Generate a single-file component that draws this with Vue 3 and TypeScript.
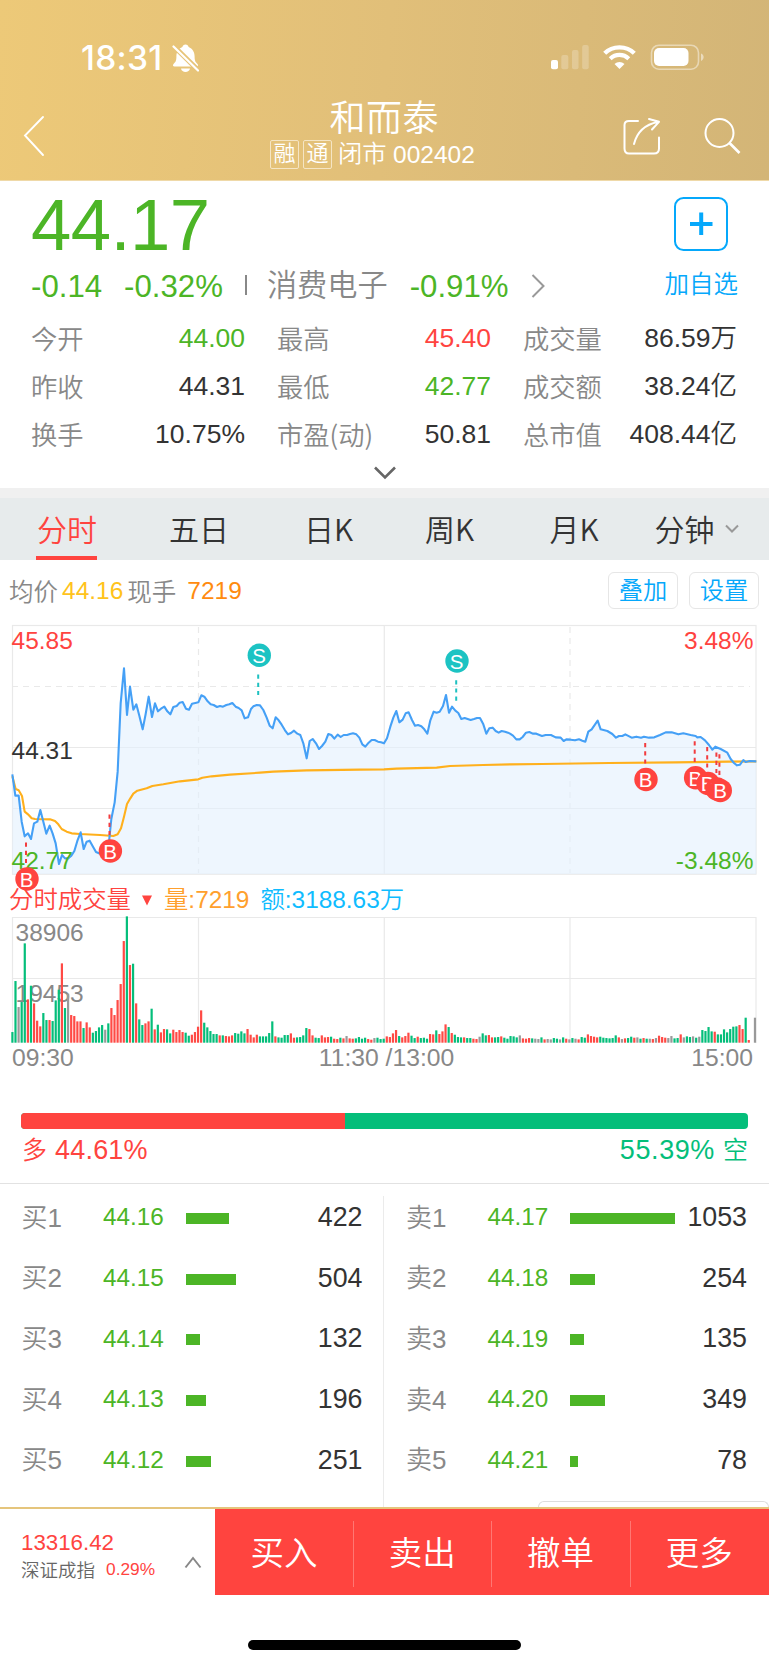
<script setup lang="ts">
interface Stat { label: string; value: string; tone?: string }
interface Marker { kind: 'B' | 'S'; cx: number; cy: number; lx: number; y1: number }
interface Level { name: string; price: string; bar: number; qty: string }

const stats: Stat[] = [
  { label: '今开', value: '44.00', tone: 'green' },
  { label: '最高', value: '45.40', tone: 'red' },
  { label: '成交量', value: '86.59万' },
  { label: '昨收', value: '44.31' },
  { label: '最低', value: '42.77', tone: 'green' },
  { label: '成交额', value: '38.24亿' },
  { label: '换手', value: '10.75%' },
  { label: '市盈(动)', value: '50.81' },
  { label: '总市值', value: '408.44亿' },
]

const tabs = ['分时', '五日', '日K', '周K', '月K', '分钟']

// Series points are stored in thirds of a pixel, origin at the chart block's corner.
const price =
  '37,478 46,542 56,542 65,620 74,664 84,655 93,672 102,625 112,620 121,585 130,620 139,656 149,632 158,656 167,685 177,747 186,720 195,730 205,730 214,722 223,708 232,678 242,652 251,702 260,680 269,677 279,695 288,711 297,715 306,715 316,712 325,700 334,612 344,562 353,470 362,265 372,160 381,300 390,215 400,284 409,268 418,302 428,343 437,297 446,245 456,306 465,265 474,289 483,281 493,275 502,289 511,298 520,276 530,273 539,263 548,261 558,281 567,284 576,266 586,264 595,262 604,241 613,245 623,259 632,268 641,270 651,276 660,273 669,275 679,270 688,268 697,264 707,275 716,279 725,286 734,310 744,307 753,282 760,274 770,270 780,271 790,285 800,308 809,332 818,340 827,307 836,316 845,329 855,346 864,358 873,354 882,347 892,356 901,360 910,385 920,430 929,378 938,372 948,385 957,402 966,393 976,380 985,357 994,360 1003,371 1013,359 1022,366 1031,360 1041,360 1050,357 1059,355 1069,358 1078,368 1087,388 1096,395 1106,383 1115,375 1124,375 1134,380 1143,382 1152,385 1161,370 1171,335 1180,308 1189,288 1198,322 1208,314 1217,295 1226,292 1236,315 1245,332 1254,330 1264,334 1273,343 1282,356 1291,316 1301,290 1310,293 1319,290 1329,273 1338,240 1347,293 1356,275 1366,287 1375,294 1384,312 1394,309 1403,312 1412,315 1422,312 1431,309 1440,309 1450,328 1459,356 1468,340 1478,338 1487,348 1496,353 1505,348 1515,350 1524,353 1530,356 1539,362 1549,373 1559,373 1568,366 1578,353 1588,351 1598,356 1609,356 1626,363 1637,360 1653,360 1667,367 1682,368 1691,378 1699,373 1712,374 1725,376 1737,373 1747,377 1756,380 1765,350 1775,343 1793,317 1802,343 1822,348 1837,357 1848,368 1857,363 1867,363 1876,358 1895,368 1909,365 1923,368 1932,365 1947,368 1963,367 1980,360 1997,352 2015,352 2035,358 2050,355 2072,360 2087,363 2092,367 2102,366 2115,376 2127,390 2137,404 2146,395 2162,402 2182,413 2192,432 2202,444 2211,451 2220,449 2230,435 2237,441 2249,438 2269,439'
const average =
  '37,484 47,522 56,526 66,543 74,590 84,598 95,610 105,612 150,613 165,618 175,628 185,642 200,650 215,655 240,657 300,660 340,663 353,658 363,640 372,605 381,567 391,550 400,536 412,527 440,520 457,513 490,508 540,499 595,493 607,488 635,484 690,479 780,473 820,470 920,466 1080,464 1152,463 1190,461 1310,458 1350,453 1450,450 1530,448 1627,447 1827,444 2027,442 2187,440 2269,439'
const area = `${price} 2269,777 37,777`

const markers: Marker[] = [
  { kind: 'S', cx: 259.3, cy: 40.3, lx: 258.2, y1: 59.5 },
  { kind: 'S', cx: 457, cy: 46, lx: 456.2, y1: 65.2 },
  { kind: 'B', cx: 27, cy: 264, lx: 26, y1: 227.5 },
  { kind: 'B', cx: 110.4, cy: 236, lx: 109.5, y1: 199.5 },
  { kind: 'B', cx: 646, cy: 164.5, lx: 645.2, y1: 128 },
  { kind: 'B', cx: 695.6, cy: 162.7, lx: 694.7, y1: 126.3 },
  { kind: 'B', cx: 708, cy: 168.5, lx: 707.2, y1: 132 },
  { kind: 'B', cx: 717, cy: 174, lx: 716.4, y1: 137.5 },
  { kind: 'B', cx: 720.3, cy: 175.6, lx: 719.4, y1: 139.3 },
]

// One entry per minute: g = falling, r = rising, x = unchanged, then the height.
const minutes =
  'g32 g185 x107 g122 g298 r130 g171 r118 r66 r49 g89 g68 r68 g65 g127 g159 r238 g104 x147 r83 r80 r64 r64 g44 r61 r46 g30 g35 g46 g53 x39 g58 r104 r83 r128 r176 r305 g379 r233 g237 r118 g70 g53 r58 r64 g102 r40 g54 r31 r41 g40 g28 r39 r32 r38 r32 g30 g21 r24 r32 r48 r97 g60 g46 g35 g26 g26 r22 g22 r20 r19 r22 g29 g27 g34 g28 r41 r24 r16 r24 g19 g19 g19 g29 g64 r19 g16 g15 g23 g23 r28 r15 g16 g17 g22 g44 r41 r22 g15 g14 r22 r16 r17 g18 r12 r11 g15 r13 x20 r13 r12 g13 g17 g12 g15 r11 r9 x14 g15 g11 g12 r19 r17 r28 r38 g20 r16 r20 r30 g21 g14 r18 g14 g15 g12 r26 r25 g37 r26 r34 r55 g47 r29 g24 g17 g16 r16 g14 g14 r12 r11 x18 g28 g22 r23 r16 g16 g17 r19 g15 g12 g20 g19 g16 x22 r13 r12 r14 g13 x12 x11 g16 r10 x11 x10 g14 g12 x10 g16 r12 x10 g14 x12 r10 g17 g15 r25 r20 r18 r16 g18 g15 g14 g13 g14 g22 r16 x11 r13 g14 g18 r15 x16 g12 r14 g12 x12 r11 x14 r21 r17 r15 x14 x20 g13 g14 r25 x16 g19 g17 x19 g15 x18 g38 g35 g47 g34 r33 g25 g25 g40 g31 g41 g48 g49 r53 r41 g75 r8 x0 x75'
const fills: Record<string, string> = { g: '#04be7a', r: '#ff4a45', x: '#999999' }
const volume = minutes.split(' ').map((m, i) => {
  const h = Number(m.slice(1)) / 3
  return { x: 11.3 + i * 3.094, y: 127.7 - h, h, fill: fills[m[0]] }
})

const books: Level[][] = [
  [
    { name: '买1', price: '44.16', bar: 43, qty: '422' },
    { name: '买2', price: '44.15', bar: 50, qty: '504' },
    { name: '买3', price: '44.14', bar: 14, qty: '132' },
    { name: '买4', price: '44.13', bar: 20, qty: '196' },
    { name: '买5', price: '44.12', bar: 25, qty: '251' },
  ],
  [
    { name: '卖1', price: '44.17', bar: 105, qty: '1053' },
    { name: '卖2', price: '44.18', bar: 25, qty: '254' },
    { name: '卖3', price: '44.19', bar: 14, qty: '135' },
    { name: '卖4', price: '44.20', bar: 35, qty: '349' },
    { name: '卖5', price: '44.21', bar: 8, qty: '78' },
  ],
]
const actions = ['买入', '卖出', '撤单', '更多']
</script>

<template>
  <div class="app">
    <header class="header">
      <div class="status">
        <span class="clock">18:31</span>
        <svg class="bell" width="27" height="29" viewBox="0 0 27 29">
          <defs>
            <mask id="slash"><rect width="27" height="29" fill="#fff" /><path d="M-1 -.5L28 28" stroke="#000" stroke-width="5" /></mask>
          </defs>
          <g fill="#fff" mask="url(#slash)">
            <path d="M13.500 .5C15.200 .5 16.300 1.500 16.600 3C20.500 4.500 22.600 8 22.600 12.500C22.600 17 23.500 18 25.500 20C26.500 21.200 26 22.500 24.500 22.500H2.500C1 22.500 .5 21.200 1.500 20C3.500 18 4.400 17 4.400 12.500C4.400 8 6.500 4.500 10.400 3C10.700 1.500 11.800 .5 13.500 .5Z" />
            <path d="M9 24.500H18C17.500 29 9.500 29 9 24.500Z" />
          </g>
          <path d="M1.500 2.500L26 26.500" stroke="#fff" stroke-width="2.200" stroke-linecap="round" />
        </svg>
        <svg class="signals" width="156" height="28" viewBox="0 0 156 28">
          <rect x="1" y="16" width="7" height="9.300" rx="2" fill="#fff" />
          <g fill="#fff" opacity=".22">
            <rect x="11.300" y="11" width="7" height="14.300" rx="2" />
            <rect x="22" y="6" width="6.500" height="19.300" rx="2" />
            <rect x="32.200" y="1" width="6.500" height="24.300" rx="2" />
          </g>
          <g fill="none" stroke="#fff" stroke-width="4.200">
            <path d="M54.700 9.300C62.500 1.300 76.500 1.300 84.300 9.300" />
            <path d="M60.200 14.700C65.500 9.700 73.500 9.700 78.800 14.700" />
          </g>
          <path d="M64.500 20C67.300 17.300 71.700 17.300 74.500 20L69.500 25Z" fill="#fff" />
          <rect x="101.500" y="1.200" width="47" height="24" rx="7.500" fill="none" stroke="#fff" stroke-opacity=".45" stroke-width="1.600" />
          <rect x="104" y="4" width="34.500" height="18" rx="5" fill="#fff" />
          <path d="M151 9.500C154.500 10.500 154.500 15.500 151 17Z" fill="#fff" opacity=".5" />
        </svg>
      </div>
      <div class="nav">
        <svg class="back" width="22" height="42" viewBox="0 0 22 42"><path d="M20 2L2 20.500L20 40" fill="none" stroke="#fff" stroke-width="1.900" stroke-linecap="round" /></svg>
        <div class="titles">
          <h1>和而泰</h1>
          <div class="sub"><i>融</i><i>通</i><b>闭市</b><span>002402</span></div>
        </div>
        <svg class="share" width="38" height="38" viewBox="0 0 38 38" fill="none" stroke="#fff" stroke-width="2" stroke-linecap="round" stroke-linejoin="round">
          <path d="M15 4H6C3 4 1.500 5.500 1.500 8V31.500C1.500 34.500 3 36.500 6 36.500H31C34.500 36.500 36 34.500 36 31.500V20.500M11 27C14 15 22 7.500 35 5M26 2L36 4.800L29 12.500" />
        </svg>
        <svg class="search" width="38" height="38" viewBox="0 0 38 38" fill="none" stroke="#fff" stroke-width="2"><circle cx="16.500" cy="16" r="14" /><path d="M26.500 26L36.500 36" stroke-width="2.600" /></svg>
      </div>
    </header>

    <section class="quote">
      <div class="last">44.17</div>
      <div class="change">
        <span class="green">-0.14</span><span class="green pct">-0.32%</span><span class="sep"></span>
        <span class="sector">消费电子</span><span class="green">-0.91%</span>
        <svg width="14" height="24" viewBox="0 0 14 24"><path d="M1.500 1L12.500 12L1.500 23" fill="none" stroke="#999" stroke-width="2" /></svg>
      </div>
      <div class="watch">
        <svg width="54" height="54" viewBox="0 0 54 54" fill="none" stroke="#05a8fb"><rect x="1" y="1" width="52" height="52" rx="8.500" stroke-width="2" /><path d="M16 27H38.500M27.200 15.500V38" stroke-width="4" /></svg>
        <span>加自选</span>
      </div>
      <div class="stats">
        <div v-for="s in stats" :key="s.label" class="stat">
          <span class="k">{{ s.label }}</span><span :class="s.tone">{{ s.value }}</span>
        </div>
      </div>
      <svg class="expand" width="24" height="16" viewBox="0 0 24 16"><path d="M2 2.500L12 12.500L22 2.500" fill="none" stroke="#666" stroke-width="2.600" /></svg>
    </section>

    <nav class="tabs">
      <div v-for="(t, i) in tabs" :key="t" class="tab" :class="{ on: i === 0 }">
        <span>{{ t }}</span>
        <svg v-if="i === 5" width="14" height="10" viewBox="0 0 14 10"><path d="M1 1.500L7 7.500L13 1.500" fill="none" stroke="#999" stroke-width="2" /></svg>
      </div>
    </nav>

    <div class="info">
      <span class="k">均价</span><span class="avg">44.16</span><span class="k now">现手</span><span class="hand">7219</span>
      <button class="first">叠加</button><button>设置</button>
    </div>

    <svg class="chart" width="769" height="267" viewBox="0 0 769 267">
      <g fill="none" stroke="#e9e9e9" stroke-width="1.200">
        <rect x="12.500" y="10.500" width="743.500" height="248.700" />
        <path d="M12 132.500H756M12 193.500H756M384.300 10V259" />
        <path d="M12 71.500H750M198.500 12V258M570 12V258" stroke-dasharray="6 5" />
      </g>
      <g transform="scale(.33333)" fill="none">
        <polygon :points="area" fill="#e2f0fd" fill-opacity=".6" />
        <polyline :points="average" stroke="#ffb01c" stroke-width="6.300" stroke-linejoin="round" />
        <polyline :points="price" stroke="#45a0f6" stroke-width="6.300" stroke-linejoin="round" />
      </g>
      <g class="axis">
        <text x="11.500" y="34" fill="#ff4340">45.85</text>
        <text x="11.500" y="144.200" fill="#333">44.31</text>
        <text x="11.500" y="254" fill="#4cb526">42.77</text>
        <text x="753.500" y="34" text-anchor="end" fill="#ff4340">3.48%</text>
        <text x="753.500" y="254" text-anchor="end" fill="#4cb526">-3.48%</text>
      </g>
      <g v-for="(m, i) in markers" :key="i">
        <path :d="`M${m.lx} ${m.y1}v21`" :stroke="m.kind === 'B' ? '#f23c3f' : '#1ec1c1'" stroke-width="2" stroke-dasharray="4.200 4" />
        <circle :cx="m.cx" :cy="m.cy" r="11.700" :fill="m.kind === 'B' ? '#ff443f' : '#1cc3c3'" />
        <text class="mark" :x="m.cx - 0.3" :y="m.cy + 7.8" text-anchor="middle">{{ m.kind }}</text>
      </g>
    </svg>

    <div class="volhead">
      <span class="red">分时成交量</span>
      <svg width="10" height="11" viewBox="0 0 10 11"><path d="M0 .5H10L5 10.500Z" fill="#ff443f" /></svg>
      <span class="vol">量:7219</span><span class="amt">额:3188.63万</span>
    </div>

    <svg class="volume" width="769" height="130" viewBox="0 0 769 130">
      <path d="M12.500 128V2.500H756V128M12 63.500H756M198.500 2V128M384.300 2V128M570 2V128" fill="none" stroke="#e9e9e9" stroke-width="1.200" />
      <g class="axis" fill="#888"><text x="15.500" y="25.500">38906</text><text x="15.500" y="87">19453</text></g>
      <rect v-for="(b, i) in volume" :key="i" :x="b.x" :y="b.y" width="2.200" :height="b.h" :fill="b.fill" />
    </svg>
    <div class="times"><span>09:30</span><span>11:30 /13:00</span><span>15:00</span></div>

    <div class="ratio"><i></i></div>
    <div class="ratio-text">
      <div class="red"><span>多</span><b>44.61%</b></div>
      <div class="short"><b>55.39%</b><span>空</span></div>
    </div>

    <section class="books">
      <div v-for="(book, i) in books" :key="i" class="book">
        <div v-for="l in book" :key="l.name" class="level">
          <span class="name">{{ l.name }}</span><span class="green">{{ l.price }}</span>
          <i :style="{ width: l.bar + 'px' }"></i><span class="qty">{{ l.qty }}</span>
        </div>
      </div>
      <div class="peek"></div>
    </section>

    <footer class="footer">
      <div class="index">
        <div class="idx-text">
          <div class="idx-value">13316.42</div>
          <div class="idx-name"><span>深证成指</span><em>0.29%</em></div>
        </div>
        <svg width="18" height="13" viewBox="0 0 18 13"><path d="M1.500 11.500L9 2L16.500 11.500" fill="none" stroke="#888" stroke-width="2" /></svg>
      </div>
      <div v-for="a in actions" :key="a" class="action">{{ a }}</div>
    </footer>
    <div class="home"></div>
  </div>
</template>

<style>
body { margin: 0; background: #fff; }
</style>

<style scoped>
* { box-sizing: border-box; }
.app { width: 769px; height: 1665px; overflow: hidden; background: #fff; color: #333; font-family: "Liberation Sans", "Noto Sans CJK SC DemiLight", "Noto Sans CJK SC", sans-serif; font-weight: 350; display: flex; flex-direction: column; }
.app > * { flex: none; }
svg { display: block; flex: none; }
i, em { font-style: normal; }
b { font-weight: inherit; }
span { white-space: nowrap; }
.green { color: #4cb526; }
.red { color: #ff443f; }
.k { color: #888; }

.header { height: 181px; background: linear-gradient(94deg, #edc978 0%, #e1bf79 50%, #d3b577 100%); color: #fff; border-bottom: 1px solid #efd9a8; }
.status { display: flex; align-items: flex-start; height: 97px; padding: 38px 0 0 81px; }
.clock { width: 83px; font: 500 33.500px/40px Inter, sans-serif; letter-spacing: .3px; }
.bell { margin: 6px 0 0 7.500px; }
.signals { margin: 6px 0 0 351.500px; }
.nav { display: flex; }
.back { margin: 18px 0 0 23px; }
.titles { width: 300px; margin-left: 225px; }
.titles h1 { margin: 0 0 0 59.500px; font-size: 36px; line-height: 44px; font-weight: inherit; letter-spacing: .5px; }
.sub { display: flex; align-items: center; height: 30px; font-size: 24.300px; line-height: 30px; margin-top: -2px; }
.sub i { width: 29px; height: 29px; margin-right: 4px; border: 1.5px solid #f5e5c4; border-radius: 2px; text-align: center; font-size: 22px; line-height: 25px; }
.sub b { margin: -1px 6.500px 0 2px; }
.sub span { margin-top: 2px; font-size: 24.500px; }
.share { margin: 20px 0 0 52.500px; }
.search { margin: 20px 0 0 42.500px; }

.quote { position: relative; height: 307px; }
.last { height: 83px; padding-left: 31px; color: #4cb526; font-size: 72.500px; line-height: 88px; letter-spacing: -.6px; }
.change { display: flex; align-items: center; height: 44px; padding-left: 31px; font-size: 31.200px; line-height: 44px; }
.change .green { padding-top: 2px; }
.change .pct { margin-left: 22px; }
.sep { width: 2px; height: 20px; margin: 0 19.500px 2px 22.500px; background: #888; }
.sector { color: #888; font-size: 30.200px; margin-right: 22px; }
.change svg { margin-left: 22.500px; }
.watch { position: absolute; right: 31px; top: 16px; display: flex; flex-direction: column; align-items: flex-end; color: #05a8fb; font-size: 24.500px; line-height: 30px; }
.watch svg { margin: 0 10.500px 18.500px 0; }
.stats { display: grid; grid-template-columns: repeat(3, 214px); column-gap: 32px; padding: 6px 0 0 31px; }
.stat { display: flex; justify-content: space-between; height: 48px; font-size: 26.500px; line-height: 48px; }
.stat .k { font-family: "Noto Sans CJK SC DemiLight", "Noto Sans CJK SC", sans-serif; font-size: 26.300px; }
.expand { margin: 7px auto 0; }

.tabs { display: grid; grid-template-columns: 134px 130px 129px 113px 136px 109px; height: 72px; border-top: 10px solid #f0f0f0; background: #e7ebec; font-family: "Noto Sans CJK SC DemiLight", "Noto Sans CJK SC", sans-serif; font-size: 30px; line-height: 60px; }
.tab { position: relative; display: flex; align-items: center; justify-content: center; }
.tab span { margin-top: -2px; }
.tab svg { margin-left: 10px; }
.on { color: #ff443f; }
.on::after { content: ''; position: absolute; left: 36px; bottom: 0; width: 61px; height: 4px; background: #ff443f; }

.info { display: flex; align-items: center; height: 55px; padding: 6px 10px 0 9px; font-size: 24.500px; }
.avg { color: #ffc31c; margin-left: 4px; }
.now { margin-left: 4px; }
.hand { color: #ff8b0f; margin-left: 11px; }
.info button { width: 70px; height: 37px; margin-left: 11px; padding: 0; border: 1px solid #e6e6e6; border-radius: 6px; background: #fff; color: #05a8fb; font: inherit; font-size: 24.300px; line-height: 35px; }
.info .first { margin-left: auto; }

.chart { position: relative; z-index: 1; overflow: visible; }
.axis { font-size: 24.500px; }
.mark { fill: #fff; font-size: 20.500px; }
.volhead { display: flex; align-items: center; height: 33px; padding: 0 0 2px 9px; font-size: 24.400px; }
.volhead svg { margin: 5px 0 0 11px; }
.vol { color: #ffa02d; margin-left: 12px; }
.amt { color: #0fbcff; margin-left: 11px; }
.times { display: flex; justify-content: space-between; padding: 0 16px 0 12px; height: 68px; font-size: 24.700px; line-height: 25px; color: #888; }
.times span:nth-child(2) { padding-left: 8px; }

.ratio { width: 727px; height: 16px; margin-left: 20.500px; border-radius: 4px; overflow: hidden; background: #04be7a; }
.ratio i { display: block; width: 44.610%; height: 100%; background: #ff443f; }
.ratio-text { display: flex; justify-content: space-between; height: 54px; padding: 2px 21px 0 22px; font-size: 25px; line-height: 39px; }
.ratio-text > div { display: flex; gap: 8px; }
.ratio-text b { font-size: 27px; letter-spacing: .6px; }
.ratio-text .red b { letter-spacing: 0.2px; }
.short { color: #04be7a; }

.books { position: relative; display: flex; height: 324px; padding-top: 3px; border-top: 1px solid #e2e2e2; }
.book { width: 385px; padding-left: 21.500px; }
.level { display: flex; align-items: center; height: 60.700px; font-size: 26px; }
.level .name { width: 81.500px; margin-top: -4.500px; color: #888; }
.level .green { width: 82.500px; font-size: 24.300px; }
.level i { height: 11px; background: #4cb526; margin-top: 2px; }
.level .qty { margin-left: auto; padding-right: 22px; font-size: 26.800px; }
.book:first-child::after { content: ''; position: absolute; left: 383px; top: 12px; bottom: 0; width: 1px; background: #ebebeb; }
.peek { position: absolute; left: 538px; right: 0; bottom: 0; height: 6px; border: 1px solid #ddd; border-bottom: 0; border-radius: 6px 6px 0 0; }

.footer { display: flex; height: 88px; border-top: 2px solid #e5c57c; }
.index { flex: none; width: 215px; display: flex; padding-left: 21px; }
.idx-text { width: 163px; padding-top: 20px; }
.idx-value { color: #ff443f; font-size: 22.300px; line-height: 28px; }
.idx-name { display: flex; line-height: 28px; font-size: 18.500px; color: #666; }
.idx-name em { color: #ff443f; margin-left: 11px; font-size: 17.300px; line-height: 25px; }
.index svg { margin-top: 47px; }
.action { position: relative; flex: none; width: 138.200px; background: #ff443f; color: #fff; font-size: 33.500px; line-height: 89px; text-align: center; }
.action:last-child { flex: 1; }
.action + .action::before { content: ''; position: absolute; left: 0; top: 12px; width: 1px; height: 66px; background: #ff7773; }
.home { width: 273px; height: 10px; margin: 44.500px auto 0; border-radius: 5px; background: #000; }
</style>
